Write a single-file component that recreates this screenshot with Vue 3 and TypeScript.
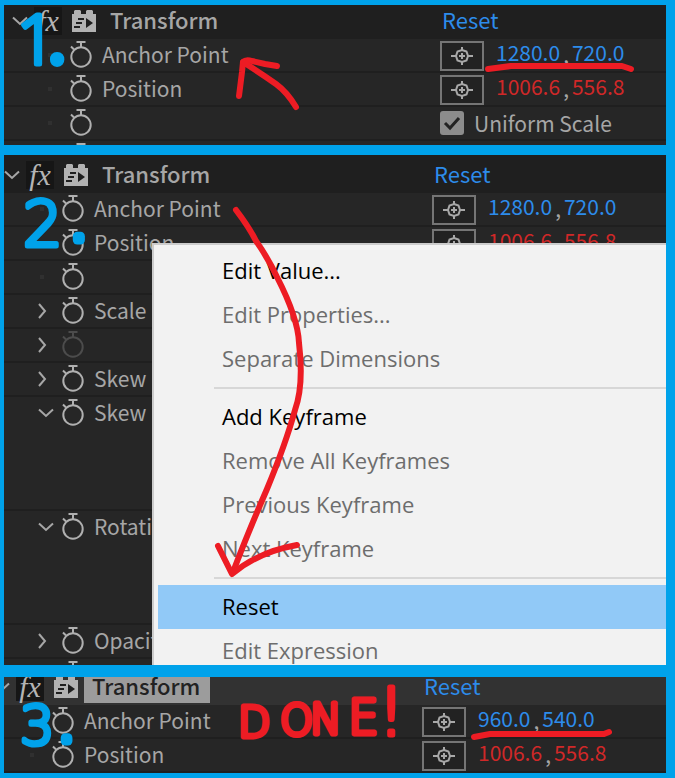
<script setup lang="ts">
import { ref } from 'vue'

type Twirl = 'open' | 'closed' | 'dot' | 'none'

interface Row {
  label: string
  twirl: Twirl
  values?: [string, string]
  changed?: boolean
  checkbox?: string
  faded?: boolean
  tall?: boolean
}

interface Panel {
  id: string
  selected?: boolean
  rows: Row[]
}

interface MenuItem {
  label: string
  disabled?: boolean
  active?: boolean
}

const moved: [string, string] = ['1006.6', '556.8']
const uniform = ref(true)

const panels: Panel[] = [
  {
    id: 'first',
    rows: [
      { label: 'Anchor Point', twirl: 'dot', values: ['1280.0', '720.0'] },
      { label: 'Position', twirl: 'dot', values: moved, changed: true },
      { label: '', twirl: 'dot', checkbox: 'Uniform Scale' },
      { label: '', twirl: 'none' },
    ],
  },
  {
    id: 'second',
    rows: [
      { label: 'Anchor Point', twirl: 'dot', values: ['1280.0', '720.0'] },
      { label: 'Position', twirl: 'dot', values: moved, changed: true },
      { label: '', twirl: 'dot' },
      { label: 'Scale', twirl: 'closed' },
      { label: '', twirl: 'closed', faded: true },
      { label: 'Skew', twirl: 'closed' },
      { label: 'Skew', twirl: 'open', tall: true },
      { label: 'Rotation', twirl: 'open', tall: true },
      { label: 'Opacity', twirl: 'closed' },
      { label: '', twirl: 'none' },
    ],
  },
  {
    id: 'third',
    selected: true,
    rows: [
      { label: 'Anchor Point', twirl: 'dot', values: ['960.0', '540.0'] },
      { label: 'Position', twirl: 'dot', values: moved, changed: true },
    ],
  },
]

const menuGroups: MenuItem[][] = [
  [
    { label: 'Edit Value...' },
    { label: 'Edit Properties...', disabled: true },
    { label: 'Separate Dimensions', disabled: true },
  ],
  [
    { label: 'Add Keyframe' },
    { label: 'Remove All Keyframes', disabled: true },
    { label: 'Previous Keyframe', disabled: true },
    { label: 'Next Keyframe', disabled: true },
  ],
  [
    { label: 'Reset', active: true },
    { label: 'Edit Expression', disabled: true },
  ],
]
</script>

<template>
  <main class="page">
    <section v-for="panel in panels" :key="panel.id" class="panel" :class="`panel--${panel.id}`">
      <header class="line head">
        <div class="name">
          <button class="twirl" type="button" aria-label="Collapse effect">
            <svg width="16" height="10" viewBox="0 0 16 10"><path d="M1 1.5L8 8L15 1.5" /></svg>
          </button>
          <button class="fx" type="button">fx</button>
          <svg class="brick" width="24" height="22" viewBox="0 0 24 22">
            <path class="brick-body" d="M0 4h2V1l1-1h5l1 1v3h5V1l1-1h5l1 1v3h3v18H0z" />
            <path class="brick-lines" d="M6 9h6M4 13h6M2 17h6" />
            <path class="brick-play" d="M14 8l7 5l-7 5z" />
          </svg>
          <h2 class="title" :class="{ 'title--selected': panel.selected }">Transform</h2>
        </div>
        <div class="value">
          <button class="reset" type="button">Reset</button>
        </div>
      </header>

      <div v-for="(row, i) in panel.rows" :key="i" class="line row" :class="{ 'row--tall': row.tall }">
        <div class="name">
          <span class="lead">
            <svg v-if="row.twirl === 'open'" class="arrow" width="16" height="10" viewBox="0 0 16 10">
              <path d="M1 1.5L8 8L15 1.5" />
            </svg>
            <svg v-else-if="row.twirl === 'closed'" class="arrow" width="10" height="16" viewBox="0 0 10 16">
              <path d="M1 1L7 8L1 15" />
            </svg>
            <i v-else-if="row.twirl === 'dot'" class="dot"></i>
          </span>
          <button class="watch" :class="{ 'watch--faded': row.faded }" type="button" aria-label="Toggle animation">
            <svg width="24" height="28" viewBox="0 0 24 28">
              <circle cx="12" cy="16" r="9.7" />
              <path d="M7.5 1h9M12 1v6M2 5.5l3 3" />
            </svg>
          </button>
          <span class="label">{{ row.label }}</span>
        </div>
        <div v-if="row.values" class="value">
          <button class="target" type="button" aria-label="Pick point">
            <svg width="24" height="22" viewBox="0 0 24 22">
              <path d="M12 5l4.500 1.500l1.500 4.500l-1.500 4.500l-4.500 1.500l-4.500-1.500l-1.500-4.500l1.500-4.500z" />
              <path d="M1 11h6M17 11h6M12 2v4M12 16v4M9 11h6M12 8v6" />
            </svg>
          </button>
          <span class="pair" :class="{ 'pair--changed': row.changed }">
            <button type="button">{{ row.values[0] }}</button>
            <span class="comma">,</span>
            <button type="button">{{ row.values[1] }}</button>
          </span>
        </div>
        <label v-else-if="row.checkbox" class="value check">
          <input v-model="uniform" type="checkbox" />
          <svg class="tick" width="24" height="24" viewBox="0 0 24 24"><path d="M5 12l5 5l9-10" /></svg>
          <span>{{ row.checkbox }}</span>
        </label>
      </div>

      <nav v-if="panel.id === 'second'" class="menu" aria-label="Property menu">
        <div v-for="(group, g) in menuGroups" :key="g" class="group">
          <button
            v-for="item in group"
            :key="item.label"
            class="item"
            :class="{ 'item--active': item.active }"
            type="button"
            :disabled="item.disabled"
          >
            {{ item.label }}
          </button>
        </div>
      </nav>
    </section>

    <svg class="ink" width="675" height="778" viewBox="0 0 675 778">
      <g class="ink-lines">
        <path d="M239 96L242 72L243 62Q246 59 252 61L265 64L277 66" />
        <path d="M243 62Q262 74 276 84Q287 92 296 107" />
        <path d="M488 69L511 66H622L631 69" />
        <path d="M236 210Q249 227 256 241Q268 258 277 277Q298 318 299 343Q304 385 295 410Q286 443 267 489Q247 535 233 572" />
        <path d="M218 546L232 574Q258 552 297 545" />
        <path d="M474 737L490 734H604L609 732" />
      </g>
      <g class="ink-steps">
        <text class="ink-first" x="17 49" y="64 62">1<tspan class="ink-stop">.</tspan></text>
        <text x="23 69" y="246 240">2<tspan class="ink-stop">.</tspan></text>
        <text class="ink-third" x="20 58" y="744 741">3<tspan class="ink-stop">.</tspan></text>
      </g>
      <text class="ink-done" x="238 280 310 348 378" y="737 735 734 734 735">DON<tspan class="ink-e">E</tspan><tspan class="ink-mark">!</tspan></text>
    </svg>
  </main>
</template>

<style>
body {
  margin: 0;
  background: #00a2ea;
}
</style>

<style scoped>
.page {
  position: relative;
  display: flex;
  flex-direction: column;
  padding: 5px 9px 5px 4px;
  font-family: 'Noto Sans CJK SC', 'Open Sans', sans-serif;
  font-size: 21px;
  line-height: 32px;
  color: #a6a6a6;
  overflow: hidden;
}

button {
  padding: 0;
  border: 0;
  background: none;
  font: inherit;
  color: inherit;
}

.panel {
  --cut: 0px;
  position: relative;
  overflow: hidden;
  background: #262626;
}

.panel--first {
  height: 140px;
}

.panel--second {
  --cut: 8px;
  height: 510px;
  margin: 10px 0 12px;
}

.panel--third {
  --cut: 18px;
}

.line {
  display: grid;
  grid-template-columns: 436px 1fr;
  margin-left: calc(0px - var(--cut));
}

.head {
  height: 34px;
  background: #1f1f1f;
  font-size: 22px;
}

.panel--second .head {
  padding-top: 4px;
}

.panel--third .head {
  margin-top: -6px;
  background: #323232;
}

.row {
  height: 32px;
  border-bottom: 2px solid #1f1f1f;
}

.row--tall {
  height: 112px;
}

.name,
.value {
  display: flex;
  align-items: center;
  height: 32px;
}

.head .name {
  padding-left: 8px;
}

.twirl {
  display: flex;
  width: 22px;
}

.twirl path,
.arrow path {
  fill: none;
  stroke: #a6a6a6;
  stroke-width: 2;
}

.fx {
  width: 28px;
  height: 28px;
  background: #161616;
  font: italic 30px/26px 'Liberation Serif', serif;
  color: #b4b4b4;
}

.brick {
  margin: 0 6px 0 10px;
}

.brick-body {
  fill: #b2b2b2;
}

.brick-lines {
  stroke: #1f1f1f;
  stroke-width: 2;
}

.brick-play {
  fill: #1f1f1f;
}

.title {
  margin: 0;
  padding: 0 10px 4px 8px;
  font-size: 22px;
  line-height: 28px;
  font-weight: 500;
}

.title--selected {
  background: #9c9c9c;
  color: #222;
}

.reset {
  padding: 0 0 4px 2px;
  color: #2d8ceb;
}

.label {
  padding-bottom: 2px;
}

.lead {
  display: flex;
  align-items: center;
  width: 62px;
  padding-left: 42px;
  box-sizing: border-box;
}

.arrow {
  flex: none;
}

.dot {
  width: 4px;
  height: 4px;
  margin-left: 2px;
  background: #303030;
}

.watch {
  display: flex;
  margin: 0 9px 0 3px;
}

.watch svg {
  fill: none;
  stroke: #b0b0b0;
  stroke-width: 2;
}

.watch--faded svg {
  stroke: #4c4c4c;
}

.target {
  display: flex;
  align-items: center;
  justify-content: center;
  align-self: flex-end;
  width: 44px;
  height: 30px;
  border: 2px solid #757575;
  background: #222;
  box-sizing: border-box;
}

.target svg {
  fill: none;
  stroke: #a8a8a8;
  stroke-width: 2;
}

.pair {
  display: flex;
  height: 32px;
  padding-left: 12px;
  line-height: 26px;
  color: #2d8ceb;
}

.pair button {
  height: 26px;
}

.pair--changed {
  color: #d02828;
}

.comma {
  padding: 2px 3px 0;
  color: #a6a6a6;
}

.check {
  position: relative;
  gap: 10px;
}

.check input {
  width: 24px;
  height: 24px;
  margin: 0;
  border-radius: 3px;
  background: #8c8c8c;
  appearance: none;
}

.tick {
  position: absolute;
  left: 0;
  fill: none;
  stroke: #222;
  stroke-width: 3;
  visibility: hidden;
}

.check input:checked + .tick {
  visibility: visible;
}

.menu {
  position: absolute;
  inset: 88px 0 0 148px;
  padding: 4px 0 0 4px;
  border: solid #ccc;
  border-width: 2px 0 0 2px;
  background: #f2f2f2;
  font-family: 'Open Sans', sans-serif;
  font-size: 22px;
  overflow: hidden;
}

.group + .group {
  padding-top: 6px;
}

.group + .group::before {
  content: '';
  display: block;
  height: 2px;
  margin: 0 0 6px 56px;
  background: #d7d7d7;
}

.item {
  display: block;
  width: 100%;
  height: 44px;
  padding: 0 0 2px 64px;
  text-align: left;
  color: #000;
}

.item:disabled {
  color: #6d6d6d;
}

.item--active {
  background: #91c9f7;
}

.ink {
  position: absolute;
  top: 0;
  left: 0;
  pointer-events: none;
}

.ink-lines {
  fill: none;
  stroke: #ed1c24;
  stroke-width: 6;
  stroke-linecap: round;
  stroke-linejoin: round;
}

.ink-steps {
  fill: #00a2ea;
  stroke: #00a2ea;
  stroke-width: 5;
  stroke-linejoin: round;
  font: 200 62px 'DejaVu Sans', sans-serif;
}

.ink-first {
  font: 300 68px 'Open Sans', sans-serif;
}

.ink-third {
  font-size: 54px;
}

.ink-stop {
  stroke-width: 9;
}

.ink-done {
  fill: #ed1c24;
  stroke: #ed1c24;
  stroke-width: 5;
  stroke-linejoin: round;
  font: 200 42px 'DejaVu Sans', sans-serif;
}

.ink-e {
  font-size: 48px;
}

.ink-mark {
  font-size: 66px;
}
</style>
